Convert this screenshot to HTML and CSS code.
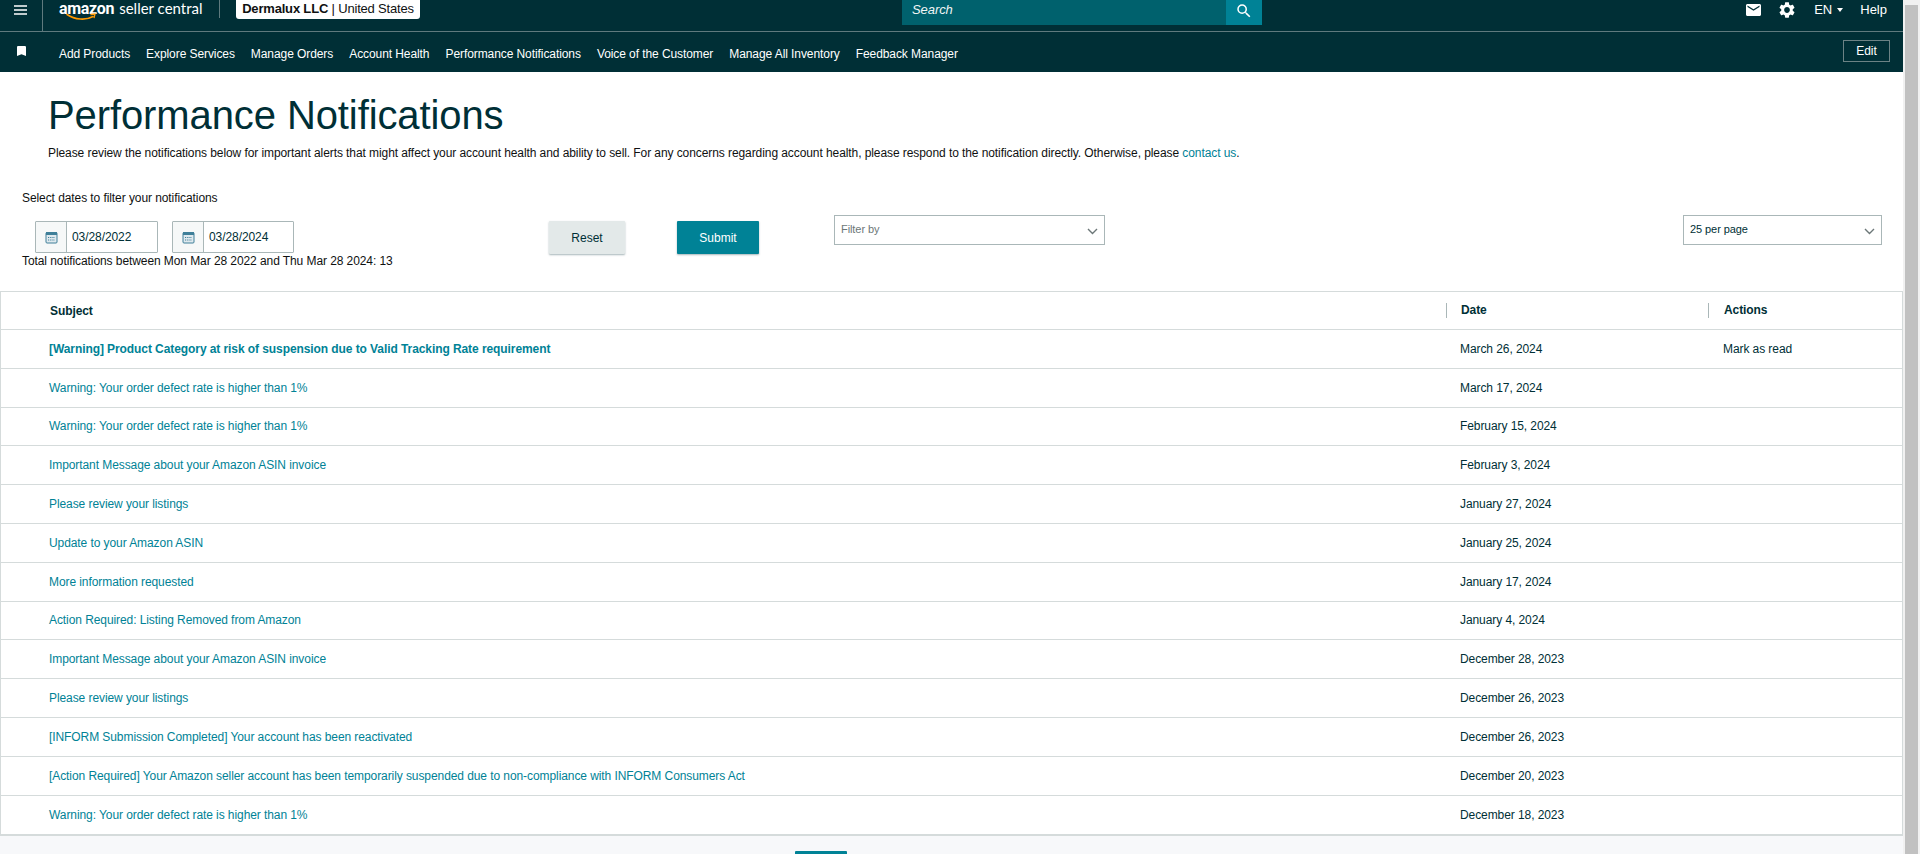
FILE: index.html
```html
<!DOCTYPE html>
<html lang="en">
<head>
  <meta charset="UTF-8" />
  <title>Performance Notifications</title>
  <link rel="stylesheet" href="styles.css">
</head>
<body>
  <div class="page">
    <!-- Top bar -->
    <header class="top-bar">
      <button class="menu-btn">
        <svg width="14" height="10" viewBox="0 0 14 10"><path d="M0 0h14v1.6H0zM0 4.2h14v1.6H0zM0 8.4h14V10H0z" fill="#fff"/></svg>
      </button>
      <div class="logo">
        <span class="logo-amazon">amazon</span><span class="logo-seller">seller central</span>
        <svg class="logo-smile" width="31" height="8" viewBox="0 0 31 8"><path d="M1 1.5C9 7 20 7.5 27 3.5" fill="none" stroke="#f90" stroke-width="1.6" stroke-linecap="round"/><path d="M24.5 1.5l4.5-.5-1 4.2" fill="none" stroke="#f90" stroke-width="1.3"/></svg>
      </div>
      <div class="account-chip"><b>Dermalux LLC</b> | United States</div>
      <div class="search">
        <span class="search-text">Search</span>
        <span class="search-btn">
          <svg width="18" height="18" viewBox="0 0 24 24"><path d="M15.5 14h-.79l-.28-.27A6.47 6.47 0 0 0 16 9.5 6.5 6.5 0 1 0 9.5 16c1.61 0 3.09-.59 4.23-1.57l.27.28v.79l5 4.99L20.49 19l-4.99-5zm-6 0C7.01 14 5 11.99 5 9.5S7.01 5 9.5 5 14 7.01 14 9.5 11.99 14 9.5 14z" fill="#fff"/></svg>
        </span>
      </div>
      <div class="top-right">
        <svg class="icon-mail" width="15" height="12" viewBox="2 4 20 16"><path d="M20 4H4c-1.1 0-2 .9-2 2v12c0 1.1.9 2 2 2h16c1.1 0 2-.9 2-2V6c0-1.1-.9-2-2-2zm0 4l-8 5-8-5V6l8 5 8-5v2z" fill="#fff"/></svg>
        <svg class="icon-gear" width="16" height="16" viewBox="2 2 20 20"><path d="M19.14 12.94c.04-.3.06-.61.06-.94 0-.32-.02-.64-.07-.94l2.03-1.58c.18-.14.23-.41.12-.61l-1.92-3.32c-.12-.22-.37-.29-.59-.22l-2.39.96c-.5-.38-1.03-.7-1.62-.94l-.36-2.54c-.04-.24-.24-.41-.48-.41h-3.84c-.24 0-.43.17-.47.41l-.36 2.54c-.59.24-1.13.57-1.62.94l-2.39-.96c-.22-.08-.47 0-.59.22L2.74 8.87c-.12.21-.08.47.12.61l2.03 1.58c-.05.3-.09.63-.09.94s.02.64.07.94l-2.03 1.58c-.18.14-.23.41-.12.61l1.92 3.32c.12.22.37.29.59.22l2.39-.96c.5.38 1.03.7 1.62.94l.36 2.54c.05.24.24.41.48.41h3.84c.24 0 .44-.17.47-.41l.36-2.54c.59-.24 1.13-.56 1.62-.94l2.39.96c.22.08.47 0 .59-.22l1.92-3.32c.12-.22.07-.47-.12-.61l-2.01-1.58zM12 15.6c-1.98 0-3.6-1.62-3.6-3.6s1.62-3.6 3.6-3.6 3.6 1.62 3.6 3.6-1.62 3.6-3.6 3.6z" fill="#fff"/></svg>
        <span class="lang">EN<i class="caret"></i></span>
        <span class="help">Help</span>
      </div>
    </header>

    <!-- Bookmarks bar -->
    <nav class="nav-bar">
      <svg class="icon-bookmark" width="9" height="10" viewBox="5 3 14 18" preserveAspectRatio="none"><path d="M17 3H7c-1.1 0-2 .9-2 2v16l7-3 7 3V5c0-1.1-.9-2-2-2z" fill="#fff"/></svg>
      <a href="#">Add Products</a>
      <a href="#">Explore Services</a>
      <a href="#">Manage Orders</a>
      <a href="#">Account Health</a>
      <a href="#">Performance Notifications</a>
      <a href="#">Voice of the Customer</a>
      <a href="#">Manage All Inventory</a>
      <a href="#">Feedback Manager</a>
      <button class="edit-btn">Edit</button>
    </nav>

    <!-- Main content -->
    <main class="content">
      <h1>Performance Notifications</h1>
      <p class="intro">Please review the notifications below for important alerts that might affect your account health and ability to sell. For any concerns regarding account health, please respond to the notification directly. Otherwise, please <a href="#">contact us</a>.</p>

      <div class="select-label">Select dates to filter your notifications</div>

      <div class="filters">
        <div class="date-input first">
          <span class="date-icon"><svg width="13" height="13" viewBox="0 0 13 13"><rect x="1" y="1.5" width="11" height="10.5" rx="1" fill="#dfe9ee" stroke="#3f7f99"/><rect x="1" y="1" width="11" height="3" fill="#3f7f99"/><path d="M3 6.5h7M3 9h7" stroke="#3f7f99" stroke-dasharray="1.2 1"/></svg></span>
          <span class="date-value">03/28/2022</span>
        </div>
        <div class="date-input second">
          <span class="date-icon"><svg width="13" height="13" viewBox="0 0 13 13"><rect x="1" y="1.5" width="11" height="10.5" rx="1" fill="#dfe9ee" stroke="#3f7f99"/><rect x="1" y="1" width="11" height="3" fill="#3f7f99"/><path d="M3 6.5h7M3 9h7" stroke="#3f7f99" stroke-dasharray="1.2 1"/></svg></span>
          <span class="date-value">03/28/2024</span>
        </div>
        <button class="btn reset">Reset</button>
        <button class="btn submit">Submit</button>
        <div class="select filter-by">
          <span>Filter by</span>
          <svg width="11" height="7" viewBox="0 0 11 7"><path d="M1 1l4.5 4.5L10 1" fill="none" stroke="#6c7778" stroke-width="1.4"/></svg>
        </div>
        <div class="select per-page">
          <span>25 per page</span>
          <svg width="11" height="7" viewBox="0 0 11 7"><path d="M1 1l4.5 4.5L10 1" fill="none" stroke="#6c7778" stroke-width="1.4"/></svg>
        </div>
      </div>

      <div class="total">Total notifications between Mon Mar 28 2022 and Thu Mar 28 2024: 13</div>

      <!-- Notifications table -->
      <div class="table">
        <div class="row head">
          <div class="subject">Subject</div>
          <div class="date"><span>Date</span></div>
          <div class="actions"><span>Actions</span></div>
        </div>
        <div class="row unread">
          <div class="subject"><a href="#">[Warning] Product Category at risk of suspension due to Valid Tracking Rate requirement</a></div>
          <div class="date">March 26, 2024</div>
          <div class="actions">Mark as read</div>
        </div>
        <div class="row">
          <div class="subject"><a href="#">Warning: Your order defect rate is higher than 1%</a></div>
          <div class="date">March 17, 2024</div>
          <div class="actions"></div>
        </div>
        <div class="row">
          <div class="subject"><a href="#">Warning: Your order defect rate is higher than 1%</a></div>
          <div class="date">February 15, 2024</div>
          <div class="actions"></div>
        </div>
        <div class="row">
          <div class="subject"><a href="#">Important Message about your Amazon ASIN invoice</a></div>
          <div class="date">February 3, 2024</div>
          <div class="actions"></div>
        </div>
        <div class="row">
          <div class="subject"><a href="#">Please review your listings</a></div>
          <div class="date">January 27, 2024</div>
          <div class="actions"></div>
        </div>
        <div class="row">
          <div class="subject"><a href="#">Update to your Amazon ASIN</a></div>
          <div class="date">January 25, 2024</div>
          <div class="actions"></div>
        </div>
        <div class="row">
          <div class="subject"><a href="#">More information requested</a></div>
          <div class="date">January 17, 2024</div>
          <div class="actions"></div>
        </div>
        <div class="row">
          <div class="subject"><a href="#">Action Required: Listing Removed from Amazon</a></div>
          <div class="date">January 4, 2024</div>
          <div class="actions"></div>
        </div>
        <div class="row">
          <div class="subject"><a href="#">Important Message about your Amazon ASIN invoice</a></div>
          <div class="date">December 28, 2023</div>
          <div class="actions"></div>
        </div>
        <div class="row">
          <div class="subject"><a href="#">Please review your listings</a></div>
          <div class="date">December 26, 2023</div>
          <div class="actions"></div>
        </div>
        <div class="row">
          <div class="subject"><a href="#">[INFORM Submission Completed] Your account has been reactivated</a></div>
          <div class="date">December 26, 2023</div>
          <div class="actions"></div>
        </div>
        <div class="row">
          <div class="subject"><a href="#">[Action Required] Your Amazon seller account has been temporarily suspended due to non-compliance with INFORM Consumers Act</a></div>
          <div class="date">December 20, 2023</div>
          <div class="actions"></div>
        </div>
        <div class="row">
          <div class="subject"><a href="#">Warning: Your order defect rate is higher than 1%</a></div>
          <div class="date">December 18, 2023</div>
          <div class="actions"></div>
        </div>
      </div>

      <div class="pager"><span class="pager-btn"></span></div>
    </main>
  </div>

  <!-- Window scrollbar, the page continues below the fold -->
  <div class="scrollbar"><div class="scroll-thumb"></div></div>
</body>
</html>
```

FILE: styles.css
```css
:root {
  --bar-color: #002f36;
  --line-color: #d5dbdb;
  --teal: #008296;
  --font-family: 'Liberation Sans', Arial, sans-serif;
}

html, body {
  height: 854px;
  overflow: hidden;
}

body {
  margin: 0;
  display: flex;
  font-family: var(--font-family);
  font-size: 12px;
  letter-spacing: -0.08px;
  color: var(--bar-color);
  background: #fff;
}

.page {
  flex: 1;
  min-width: 0;
  display: flex;
  flex-direction: column;
}

/* Window scrollbar */
.scrollbar {
  width: 17px;
  background: #f1f1f1;
  padding: 5px 2px 0;
  box-sizing: border-box;
  display: flex;
}
.scroll-thumb {
  flex: 1;
  background: #c1c1c1;
}

/* Top bar */
.top-bar {
  height: 32px;
  box-sizing: border-box;
  flex: none;
  display: flex;
  align-items: flex-start;
  background: var(--bar-color);
  color: #fff;
  border-bottom: 1px solid #5f7a7e;
}
.menu-btn {
  width: 43px;
  height: 31px;
  padding: 0 15px 11px 14px;
  background: none;
  border: 0;
  border-right: 1px solid #5f7a7e;
  display: flex;
  align-items: center;
  box-sizing: border-box;
}
.logo {
  position: relative;
  width: 160px;
  height: 18px;
  margin: 0 16px 0 16px;
  border-right: 1px solid #5f7a7e;
  display: flex;
  align-items: flex-start;
  white-space: nowrap;
}
.logo-amazon {
  font-family: Roboto, sans-serif;
  font-weight: 700;
  font-size: 16px;
  line-height: 17px;
  letter-spacing: -0.3px;
}
.logo-seller {
  font-family: Lato, sans-serif;
  font-weight: 400;
  font-size: 15px;
  line-height: 16px;
  letter-spacing: 0;
  margin-left: 5px;
}
.logo-smile {
  position: absolute;
  left: 7px;
  top: 13px;
}
.account-chip {
  width: 184px;
  height: 19px;
  flex: none;
  box-sizing: border-box;
  background: #fff;
  color: #0f1111;
  border-radius: 0 0 3px 3px;
  font-size: 13px;
  letter-spacing: -0.18px;
  line-height: 18px;
  text-align: center;
  white-space: nowrap;
}
.account-chip b {
  font-weight: 700;
}
.search {
  width: 360px;
  height: 25px;
  margin-left: 482px;
  display: flex;
  background: #00616d;
}
.search-text {
  flex: 1;
  padding-left: 10px;
  font-style: italic;
  font-size: 13px;
  line-height: 19px;
  color: #f1f5f5;
}
.search-btn {
  width: 36px;
  height: 25px;
  background: var(--teal);
  display: flex;
  align-items: center;
  justify-content: center;
  padding-bottom: 4px;
  box-sizing: border-box;
}
.top-right {
  margin-left: auto;
  padding-right: 16px;
  height: 19px;
  display: flex;
  align-items: center;
  font-size: 13px;
  letter-spacing: 0;
}
.icon-mail {
  margin: 1px 18px 0 0;
}
.icon-gear {
  margin: 1px 19px 0 0;
}
.lang {
  display: flex;
  align-items: center;
  margin-right: 17px;
}
.caret {
  width: 0;
  height: 0;
  margin-left: 5px;
  border: 3.5px solid transparent;
  border-top: 4px solid #fff;
  border-bottom: 0;
}

/* Bookmarks bar */
.nav-bar {
  height: 40px;
  flex: none;
  display: flex;
  align-items: center;
  background: var(--bar-color);
  padding: 0 13px 0 17px;
}
.icon-bookmark {
  margin: 0 33px 3px 0;
}
.nav-bar a {
  color: #fff;
  text-decoration: none;
  font-size: 12px;
  margin-right: 16px;
  margin-top: 3px;
}
.edit-btn {
  margin-left: auto;
  width: 47px;
  height: 22px;
  padding: 0;
  background: none;
  border: 1px solid #6c8285;
  color: #fff;
  font-family: var(--font-family);
  font-size: 12px;
  margin-bottom: 3px;
}

/* Main content */
.content {
  flex: 1;
  background: #fff;
  display: flex;
  flex-direction: column;
}
h1 {
  margin: 0;
  padding: 20px 0 0 48px;
  font-weight: 400;
  font-size: 40px;
  letter-spacing: -0.1px;
  line-height: 46px;
}
.intro {
  margin: 0;
  padding: 8px 0 0 48px;
  line-height: 14px;
  color: #0f1111;
}
.intro a {
  color: var(--teal);
  text-decoration: none;
}
.select-label {
  padding: 31px 0 0 22px;
  line-height: 14px;
  color: #0f1111;
}

/* Filter row */
.filters {
  display: flex;
  align-items: flex-start;
  height: 49px;
  padding: 10px 0 0 35px;
  box-sizing: border-box;
}
.date-input {
  height: 32px;
  margin-top: 6px;
  display: flex;
  box-sizing: border-box;
  border: 1px solid #aab7b8;
  border-radius: 1px;
}
.date-input.first {
  width: 123px;
  margin-right: 14px;
}
.date-input.second {
  width: 122px;
}
.date-icon {
  width: 30px;
  flex: none;
  display: flex;
  align-items: center;
  justify-content: center;
  border-right: 1px solid #aab7b8;
  background: #f6f8f8;
}
.date-value {
  padding-left: 5px;
  line-height: 30px;
}
.btn {
  height: 33px;
  margin-top: 6px;
  border: 0;
  border-radius: 1px;
  font-family: var(--font-family);
  font-size: 12px;
  box-shadow: 0 1px 2px rgba(0, 47, 54, 0.35);
}
.reset {
  width: 76px;
  margin-left: 255px;
  background: #e3e9e9;
  color: var(--bar-color);
}
.submit {
  width: 82px;
  margin-left: 52px;
  background: var(--teal);
  color: #fff;
}
.select {
  height: 30px;
  box-sizing: border-box;
  border: 1px solid #aab7b8;
  padding: 0 6px 2px;
  display: flex;
  justify-content: space-between;
  align-items: center;
  font-size: 11px;
  background: #fff;
}
.select svg {
  margin-top: 4px;
}
.filter-by {
  width: 271px;
  margin-left: 75px;
  color: #6c7778;
}
.per-page {
  width: 199px;
  margin-left: 578px;
}
.total {
  padding: 0 0 0 22px;
  height: 37px;
  line-height: 14px;
  color: #0f1111;
}

/* Table */
.table {
  background: #fff;
  border: 1px solid var(--line-color);
  border-bottom-width: 2px;
}
.row {
  height: 38.8px;
  box-sizing: border-box;
  display: grid;
  grid-template-columns: 1445px 262px 1fr;
  align-items: center;
  border-bottom: 1px solid var(--line-color);
}
.row:last-child {
  border-bottom: 0;
}
.row.head {
  height: 38px;
  font-weight: 700;
}
.subject {
  padding-left: 48px;
}
.subject a {
  color: var(--teal);
  text-decoration: none;
}
.unread .subject a {
  font-weight: 700;
}
.date {
  padding-left: 14px;
}
.actions {
  padding-left: 15px;
}
.head .subject {
  padding-left: 49px;
}
.head .date, .head .actions {
  height: 15px;
  line-height: 15px;
  border-left: 1px solid #aab7b8;
}

/* Pagination, only its top edge is on screen */
.pager {
  flex: 1;
  display: flex;
  align-items: flex-start;
  background: #f7f8fa;
  padding: 15px 0 0 795px;
}
.pager-btn {
  width: 52px;
  height: 30px;
  background: var(--teal);
  border-radius: 1px;
}
```
